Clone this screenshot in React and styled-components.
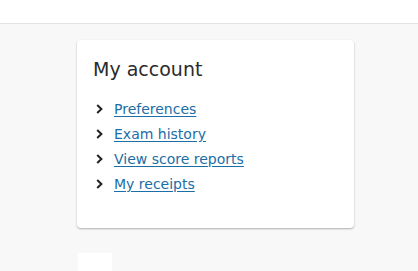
import React from "react";
import styled, { createGlobalStyle } from "styled-components";

const GlobalStyle = createGlobalStyle`
  body {
    margin: 0;
    background: #f8f8f8;
    font-family: "DejaVu Sans", Verdana, sans-serif;
  }
`;

const Header = styled.div`
  height: 23px;
  background: #ffffff;
  border-bottom: 1px solid #e2e2e2;
`;

const Main = styled.div`
  display: flex;
  flex-direction: column;
  align-items: flex-start;
  gap: 25px;
  padding: 16px 0 0 77px;
`;

const Card = styled.div`
  width: 277px;
  box-sizing: border-box;
  background: #ffffff;
  border-radius: 4px;
  box-shadow: 0 1px 2px rgba(0, 0, 0, 0.3);
  padding: 16px 16px 32px 16px;
`;

const Title = styled.h2`
  margin: 0 0 14px 0;
  font-size: 19px;
  font-weight: normal;
  line-height: 26px;
  color: #2b2b2b;
`;

const List = styled.ul`
  list-style: none;
  margin: 0;
  padding: 0 0 0 3px;
  display: flex;
  flex-direction: column;
`;

const Item = styled.li`
  display: flex;
  align-items: center;
  gap: 11px;
  height: 25px;
`;

const Link = styled.a`
  color: #1b6ea6;
  font-size: 14px;
  text-decoration: underline;
  text-underline-offset: 2px;
`;

const Placeholder = styled.div`
  width: 34px;
  height: 20px;
  margin-left: 1px;
  background: #ffffff;
`;

const Chevron = () => (
  <svg width="7" height="10" viewBox="0 0 7 10">
    <path d="M1.2 1 L5.4 5 L1.2 9" fill="none" stroke="#222222" strokeWidth="2" />
  </svg>
);

const links = ["Preferences", "Exam history", "View score reports", "My receipts"];

export default function App() {
  return (
    <>
      <GlobalStyle />
      <Header />
      <Main>
        <Card>
          <Title>My account</Title>
          <List>
            {links.map((l) => (
              <Item key={l}>
                <Chevron />
                <Link href="#">{l}</Link>
              </Item>
            ))}
          </List>
        </Card>
        <Placeholder />
      </Main>
    </>
  );
}
